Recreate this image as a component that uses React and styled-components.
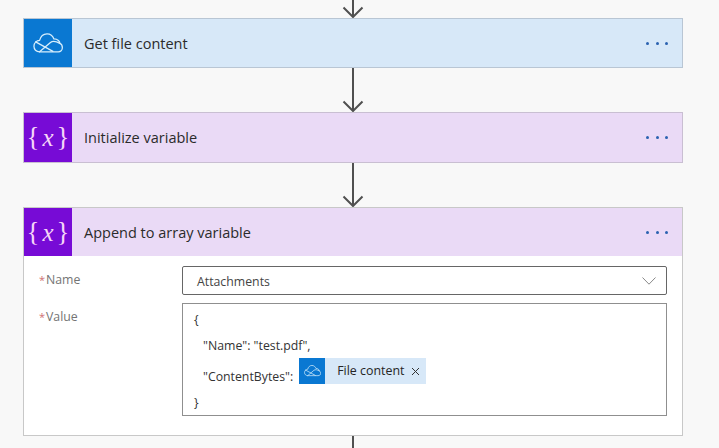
import React from 'react';
import styled, { createGlobalStyle } from 'styled-components';

const Global = createGlobalStyle`
  html, body { margin: 0; padding: 0; }
  body { background: #f8f8f8; font-family: "Open Sans", "Noto Sans", sans-serif; color: #252525; }
`;

const Page = styled.div`
  width: 719px;
  height: 448px;
  overflow: hidden;
  padding-left: 23px;
  box-sizing: border-box;
  background: #f8f8f8;
`;

const Flow = styled.div`
  width: 660px;
  display: flex;
  flex-direction: column;
  align-items: stretch;
`;

const Connector = styled.div`
  height: ${p => p.$h}px;
  display: flex;
  justify-content: center;
  svg { display: block; }
`;

const Card = styled.div`
  border: 1px solid ${p => p.$open ? '#c8c8c8' : p.$tone === 'blue' ? '#b9c6d4' : '#c9bfd2'};
  background: #fff;
`;

const Header = styled.div`
  display: flex;
  align-items: center;
  height: ${p => p.$h}px;
  background: ${p => p.$tone === 'blue' ? '#d7e8f8' : '#eadaf6'};
`;

const Tile = styled.div`
  width: 48px;
  align-self: stretch;
  flex: none;
  display: flex;
  align-items: center;
  justify-content: center;
  background: ${p => p.$tone === 'blue' ? '#0a78d2' : '#770bd6'};
`;

const VarGlyph = styled.div`
  display: flex;
  align-items: center;
  color: #f5d6f7;
  font-family: "Liberation Serif", serif;
  line-height: 1;
`;

const Brace = styled.span`
  font-size: 27px;
`;

const VarX = styled.span`
  font-style: italic;
  font-size: 25px;
  margin: 0 3px;
`;

const Title = styled.div`
  flex: 1;
  padding-left: 12px;
  font-size: 14.5px;
  color: #2b2b2b;
`;

const More = styled.div`
  display: flex;
  gap: 6.5px;
  margin-right: 14px;
`;

const Dot = styled.span`
  width: 3px;
  height: 3px;
  border-radius: 50%;
  background: #2a62b0;
`;

const Body = styled.div`
  padding: 10px 15px 19px 14px;
  display: flex;
  flex-direction: column;
  gap: 8px;
`;

const Row = styled.div`
  display: flex;
`;

const Label = styled.div`
  width: 144px;
  flex: none;
  display: flex;
  font-size: 12.3px;
  color: #747474;
  line-height: 16px;
  padding-top: 6px;
  box-sizing: border-box;
`;

const Star = styled.span`
  width: 7px;
  margin-left: 1px;
  font-size: 11px;
  color: #cf6f72;
`;

const Select = styled.div`
  flex: 1;
  height: 29px;
  box-sizing: border-box;
  border: 1px solid #666;
  border-radius: 2px;
  display: flex;
  align-items: center;
  justify-content: space-between;
  padding: 1px 10px 0 14px;
  font-size: 12.3px;
  color: #444;
`;

const Editor = styled.div`
  flex: 1;
  height: 113px;
  box-sizing: border-box;
  border: 1px solid #8f8f8f;
  padding: 8px 0 0 11px;
  font-size: 12.3px;
  line-height: 16px;
  color: #333;
  display: flex;
  flex-direction: column;
`;

const Line = styled.div`
  height: ${p => p.$h}px;
  display: flex;
  align-items: flex-start;
  padding-left: ${p => p.$indent || 0}px;
`;

const LineText = styled.span`
  margin-top: ${p => p.$top || 0}px;
`;

const Token = styled.div`
  display: flex;
  align-items: center;
  height: 26px;
  margin-left: 6px;
  background: #d7e8f8;
  color: #252525;
`;

const TokenIcon = styled.div`
  width: 26px;
  height: 26px;
  display: flex;
  align-items: center;
  justify-content: center;
  background: #0a78d2;
`;

const TokenText = styled.span`
  padding: 0 7px 0 12px;
  font-size: 12.4px;
`;

const TokenClose = styled.span`
  display: flex;
  padding-right: 6px;
`;

const Arrow = ({ h }) => (
  <svg width="24" height={h} viewBox={`0 0 24 ${h}`} fill="none" stroke="#505050" strokeWidth="2">
    <path d={`M12 0V${h - 1}`} />
    <path d={`M2.5 ${h - 10.5}L12 ${h - 1}L21.5 ${h - 10.5}`} />
  </svg>
);

const Stem = ({ h }) => (
  <svg width="24" height={h} viewBox={`0 0 24 ${h}`} fill="none" stroke="#505050" strokeWidth="2">
    <path d={`M12 0V${h}`} />
  </svg>
);

// onedrive outline, crossing lines inside the cloud
const Cloud = ({ size }) => (
  <svg width={size} height={size * 0.66} viewBox="0 0 30 20" fill="none" stroke="#d7eefc" strokeWidth="1.3" strokeLinejoin="round" strokeLinecap="round">
    <path d="M6.5 19C3 19 .8 16.5 .8 13.5C.8 10 3.5 7.8 6.5 7.5C7.5 3.5 10 .8 14 .8C17.5 .8 20 3 21 6C25 6 27 8.5 27 10.5C28.5 11 29.5 13 29.5 15C29.5 17.5 27.5 19 25.5 19Z" />
    <path d="M2.5 9L20 18.5" />
    <path d="M6.5 19L17.5 9.5C20 7.5 23.5 8.5 27 10.5" />
  </svg>
);

const VarIcon = () => (
  <VarGlyph>
    <Brace>{'{'}</Brace>
    <VarX>x</VarX>
    <Brace>{'}'}</Brace>
  </VarGlyph>
);

const Dots = () => (
  <More>
    <Dot />
    <Dot />
    <Dot />
  </More>
);

export default function App() {
  return (
    <Page>
      <Global />
      <Flow>
        <Connector $h={18}><Arrow h={18} /></Connector>
        <Card $tone="blue">
          <Header $tone="blue" $h={48}>
            <Tile $tone="blue"><Cloud size={30} /></Tile>
            <Title>Get file content</Title>
            <Dots />
          </Header>
        </Card>
        <Connector $h={44}><Arrow h={44} /></Connector>
        <Card $tone="purple">
          <Header $tone="purple" $h={49}>
            <Tile $tone="purple"><VarIcon /></Tile>
            <Title>Initialize variable</Title>
            <Dots />
          </Header>
        </Card>
        <Connector $h={44}><Arrow h={44} /></Connector>
        <Card $open>
          <Header $tone="purple" $h={48}>
            <Tile $tone="purple"><VarIcon /></Tile>
            <Title>Append to array variable</Title>
            <Dots />
          </Header>
          <Body>
            <Row>
              <Label><Star>*</Star>Name</Label>
              <Select>
                Attachments
                <svg width="14" height="8" viewBox="0 0 14 8" fill="none" stroke="#888" strokeWidth="1">
                  <path d="M.5.5L7 7.2L13.5.5" />
                </svg>
              </Select>
            </Row>
            <Row>
              <Label><Star>*</Star>Value</Label>
              <Editor>
                <Line $h={16}>{'{'}</Line>
                <Line $h={30} $indent={9}><LineText $top={10}>"Name": "test.pdf",</LineText></Line>
                <Line $h={32} $indent={9}>
                  <LineText $top={11}>"ContentBytes":</LineText>
                  <Token>
                    <TokenIcon><Cloud size={17} /></TokenIcon>
                    <TokenText>File content</TokenText>
                    <TokenClose>
                      <svg width="9" height="9" viewBox="0 0 9 9" fill="none" stroke="#333" strokeWidth="1">
                        <path d="M1 1L8 8M8 1L1 8" />
                      </svg>
                    </TokenClose>
                  </Token>
                </Line>
                <Line $h={24}><LineText $top={5}>{'}'}</LineText></Line>
              </Editor>
            </Row>
          </Body>
        </Card>
        <Connector $h={14}><Stem h={14} /></Connector>
      </Flow>
    </Page>
  );
}
